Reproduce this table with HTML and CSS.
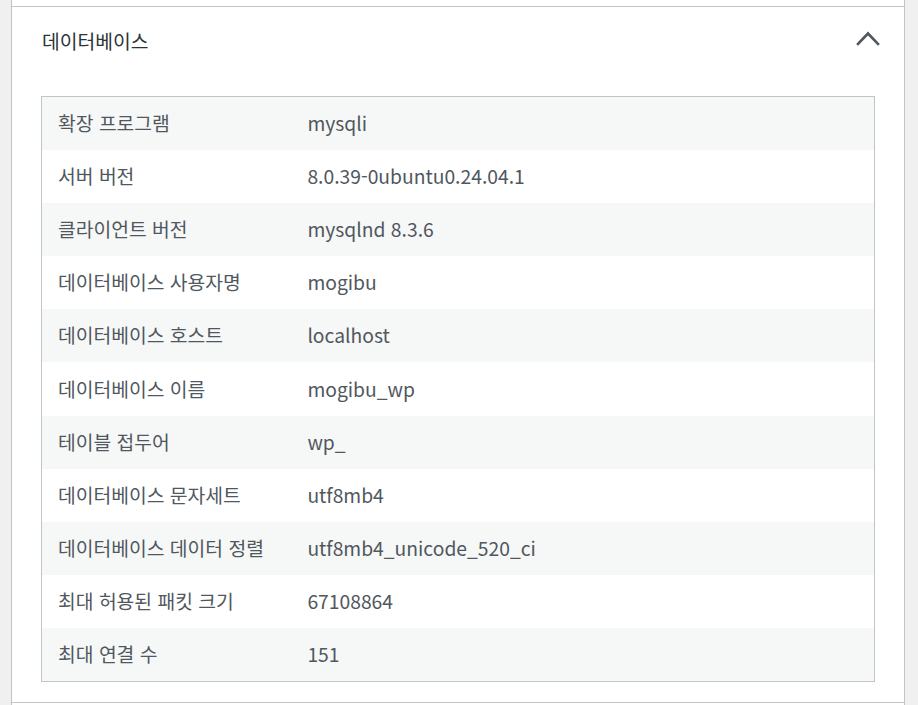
FILE: index.html
```html
<!DOCTYPE html>
<html lang="ko">
<head>
<meta charset="utf-8">
<link rel="stylesheet" href="styles.css">
</head>
<body>
<div class="accordion">
  <div class="item prev"></div>
  <section class="item open">
    <div class="trigger">
      <span class="title">데이터베이스</span>
      <svg class="chevron" width="24" height="16" viewBox="0 0 24 16" aria-hidden="true">
        <polyline points="2,13 12,2.5 22,13" fill="none" stroke="#50575e" stroke-width="2.6" stroke-linecap="square" stroke-linejoin="miter"/>
      </svg>
    </div>
    <div class="panel">
      <table class="info">
        <tbody>
          <tr><td>확장 프로그램</td><td>mysqli</td></tr>
          <tr><td>서버 버전</td><td>8.0.39-0ubuntu0.24.04.1</td></tr>
          <tr><td>클라이언트 버전</td><td>mysqlnd 8.3.6</td></tr>
          <tr><td>데이터베이스 사용자명</td><td>mogibu</td></tr>
          <tr><td>데이터베이스 호스트</td><td>localhost</td></tr>
          <tr><td>데이터베이스 이름</td><td>mogibu_wp</td></tr>
          <tr><td>테이블 접두어</td><td>wp_</td></tr>
          <tr><td>데이터베이스 문자세트</td><td>utf8mb4</td></tr>
          <tr><td>데이터베이스 데이터 정렬</td><td>utf8mb4_unicode_520_ci</td></tr>
          <tr><td>최대 허용된 패킷 크기</td><td>67108864</td></tr>
          <tr><td>최대 연결 수</td><td>151</td></tr>
        </tbody>
      </table>
    </div>
  </section>
  <div class="item next"></div>
</div>
</body>
</html>
```

FILE: styles.css
```css
html, body {
  margin: 0;
  padding: 0;
  background: #f0f0f1;
  height: 705px;
  overflow: hidden;
}

body {
  font-family: "Noto Sans CJK KR", "Noto Sans", sans-serif;
}

.accordion {
  margin-left: 11px;
  width: 894px;
  box-sizing: border-box;
}

.item {
  background: #fff;
  border-left: 1px solid #c3c4c7;
  border-right: 1px solid #c3c4c7;
  border-bottom: 1px solid #c3c4c7;
}

.prev {
  height: 6px;
}

.next {
  height: 20px;
  border-bottom: none;
}

.trigger {
  height: 70px;
  display: flex;
  align-items: center;
  justify-content: space-between;
  padding: 0 24px 0 30px;
}

.title {
  font-size: 19.3px;
  color: #2c3338;
  line-height: 1;
  margin-top: -1px;
}

.chevron {
  display: block;
  margin-top: -7px;
}

.panel {
  padding: 19px 29px 20px 29px;
}

.info {
  width: 100%;
  border-collapse: collapse;
  border: 1px solid #c3c4c7;
  table-layout: fixed;
}

.info td {
  box-sizing: border-box;
  height: 53.2px;
  padding: 0 16px;
  font-size: 19.3px;
  color: #50575e;
  vertical-align: middle;
  line-height: 1.4;
}

.info td:first-child {
  width: 30%;
}

.info tr:nth-child(odd) {
  background: #f6f7f7;
}
```
